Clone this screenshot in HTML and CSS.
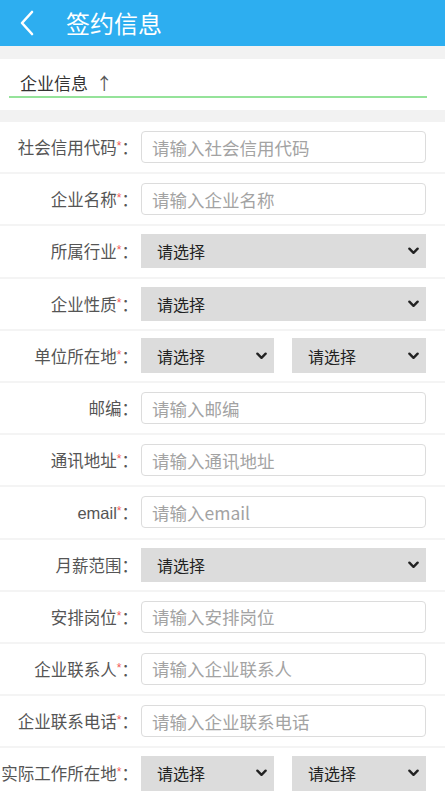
FILE: index.html
```html
<!DOCTYPE html>
<html lang="zh-CN">
<head>
    <meta charset="UTF-8">
    <meta name="viewport" content="width=device-width, initial-scale=1.0">
    <title>签约信息</title>
    <link rel="stylesheet" href="styles.css">
</head>
<body>

    <!-- 顶部导航 -->
    <div class="header">
        <span class="back">
            <svg width="16" height="26" viewBox="0 0 16 26">
                <path d="M13 2 L3 13 L13 24" fill="none" stroke="#fff" stroke-width="2.6" stroke-linecap="round" stroke-linejoin="round"/>
            </svg>
        </span>
        <h1>签约信息</h1>
    </div>

    <div class="section">
        <div class="section-title">企业信息 <span class="arrow">↑</span></div>
    </div>

    <form class="form">
        <div class="row">
            <label>社会信用代码<i>*</i>：</label>
            <input type="text" placeholder="请输入社会信用代码">
        </div>
        <div class="row">
            <label>企业名称<i>*</i>：</label>
            <input type="text" placeholder="请输入企业名称">
        </div>
        <div class="row">
            <label>所属行业<i>*</i>：</label>
            <div class="select"><select><option>请选择</option></select><svg class="chev" viewBox="0 0 12 8"><path d="M1.5 1.5 L6 6 L10.5 1.5"/></svg></div>
        </div>
        <div class="row">
            <label>企业性质<i>*</i>：</label>
            <div class="select"><select><option>请选择</option></select><svg class="chev" viewBox="0 0 12 8"><path d="M1.5 1.5 L6 6 L10.5 1.5"/></svg></div>
        </div>
        <div class="row">
            <label>单位所在地<i>*</i>：</label>
            <div class="pair">
                <div class="select"><select><option>请选择</option></select><svg class="chev" viewBox="0 0 12 8"><path d="M1.5 1.5 L6 6 L10.5 1.5"/></svg></div>
                <div class="select"><select><option>请选择</option></select><svg class="chev" viewBox="0 0 12 8"><path d="M1.5 1.5 L6 6 L10.5 1.5"/></svg></div>
            </div>
        </div>
        <div class="row">
            <label>邮编：</label>
            <input type="text" placeholder="请输入邮编">
        </div>
        <div class="row">
            <label>通讯地址<i>*</i>：</label>
            <input type="text" placeholder="请输入通讯地址">
        </div>
        <div class="row">
            <label>email<i>*</i>：</label>
            <input type="text" placeholder="请输入email">
        </div>
        <div class="row">
            <label>月薪范围：</label>
            <div class="select"><select><option>请选择</option></select><svg class="chev" viewBox="0 0 12 8"><path d="M1.5 1.5 L6 6 L10.5 1.5"/></svg></div>
        </div>
        <div class="row">
            <label>安排岗位<i>*</i>：</label>
            <input type="text" placeholder="请输入安排岗位">
        </div>
        <div class="row">
            <label>企业联系人<i>*</i>：</label>
            <input type="text" placeholder="请输入企业联系人">
        </div>
        <div class="row">
            <label>企业联系电话<i>*</i>：</label>
            <input type="text" placeholder="请输入企业联系电话">
        </div>
        <div class="row">
            <label>实际工作所在地<i>*</i>：</label>
            <div class="pair">
                <div class="select"><select><option>请选择</option></select><svg class="chev" viewBox="0 0 12 8"><path d="M1.5 1.5 L6 6 L10.5 1.5"/></svg></div>
                <div class="select"><select><option>请选择</option></select><svg class="chev" viewBox="0 0 12 8"><path d="M1.5 1.5 L6 6 L10.5 1.5"/></svg></div>
            </div>
        </div>
    </form>

</body>
</html>
```

FILE: styles.css
```css
body {
    font-family: "Liberation Sans", "Noto Sans CJK SC", sans-serif;
    background: #f2f2f2;
    margin: 0;
    overflow: hidden;
}

.header {
    background: #2daef0;
    height: 46px;
    display: flex;
    align-items: center;
    color: #fff;
}

.back {
    display: flex;
    width: 16px;
    margin-left: 19px;
}

.header h1 {
    font-family: "Noto Sans CJK SC", sans-serif;
    font-size: 24px;
    font-weight: normal;
    margin: 0 0 0 31px;
    line-height: 1;
}

.section {
    background: #fff;
    margin-top: 13px;
    height: 51px;
    padding: 0 18px 0 9px;
}

.section-title {
    font-family: "Noto Sans CJK SC", sans-serif;
    font-size: 17px;
    color: #333;
    height: 37px;
    line-height: 48px;
    padding-left: 11px;
    border-bottom: 2px solid #95e39a;
}

.arrow {
    color: #555;
    margin-left: 4px;
}

.form {
    margin-top: 12px;
    background: #fff;
}

.row {
    height: 50.2px;
    display: flex;
    align-items: center;
    border-bottom: 2px solid #f4f4f4;
}

.row label {
    width: 138px;
    flex-shrink: 0;
    display: flex;
    align-items: baseline;
    justify-content: flex-end;
    white-space: nowrap;
    font-size: 16.5px;
    color: #555;
    margin-right: 3px;
}

.row label i {
    font-style: normal;
    color: #f25a5a;
    font-size: 12px;
    position: relative;
    top: -4px;
}

input {
    width: 285px;
    height: 32px;
    box-sizing: border-box;
    border: 1px solid #dcdcdc;
    border-radius: 4px;
    padding: 0 10px;
    font-family: "Noto Sans CJK SC", sans-serif;
    font-size: 17.5px;
    color: #333;
    outline: none;
}

input::placeholder {
    color: #a3a3a3;
}

.select {
    position: relative;
    width: 285px;
    height: 34px;
}

.pair {
    display: flex;
    gap: 18px;
    width: 285px;
}

.pair .select {
    width: 133px;
    height: 35px;
}

.pair .select + .select {
    width: 134px;
}

select {
    appearance: none;
    -webkit-appearance: none;
    width: 100%;
    height: 100%;
    border: none;
    border-radius: 0;
    background: #dcdcdc;
    padding: 0 0 0 16px;
    font-family: "Noto Sans CJK SC", sans-serif;
    font-size: 16px;
    color: #222;
    outline: none;
}

.chev {
    position: absolute;
    right: 7px;
    top: 50%;
    width: 11px;
    height: 8px;
    margin-top: -4px;
    fill: none;
    stroke: #222;
    stroke-width: 2.6;
    stroke-linecap: round;
    stroke-linejoin: round;
    pointer-events: none;
}
```
